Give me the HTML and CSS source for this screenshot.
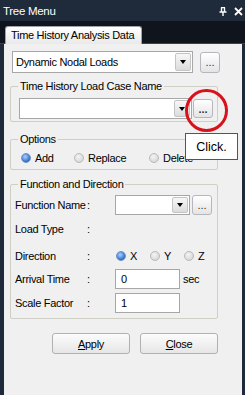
FILE: index.html
```html
<!DOCTYPE html>
<html lang="en">
<head>
    <meta charset="UTF-8">
    <title>Tree Menu</title>
    <link rel="stylesheet" href="styles.css">
</head>
<body>

    <div class="titlebar">
        <span class="title">Tree Menu</span>
        <span class="title-icons">
            <svg width="8" height="9" viewBox="0 0 8 9">
                <path d="M2 0.5h4M2.5 0.5v4.5M5.5 0.5v4.5M0.5 5h7M4 5v4" stroke="#fff" stroke-width="1.4" fill="none"/>
            </svg>
            <svg width="9" height="9" viewBox="0 0 9 9">
                <path d="M1 1L8 8M8 1L1 8" stroke="#fff" stroke-width="1.8"/>
            </svg>
        </span>
    </div>

    <div class="tabstrip">
        <div class="tab">Time History Analysis Data</div>
    </div>

    <div class="panel">
        <div class="top-row">
            <div class="combo combo-wide">
                <span class="combo-text">Dynamic Nodal Loads</span>
                <span class="combo-arrow"></span>
            </div>
            <button class="dots">...</button>
        </div>

        <div class="group group-case">
            <div class="group-title">Time History Load Case Name</div>
            <div class="case-row">
                <div class="combo combo-case">
                    <span class="combo-text"></span>
                    <span class="combo-arrow"></span>
                </div>
                <button class="dots dots-case">...</button>
            </div>
        </div>

        <div class="group group-options">
            <div class="group-title">Options</div>
            <div class="radio-row">
                <span class="opt opt-add"><span class="radio checked"></span>Add</span>
                <span class="opt opt-replace"><span class="radio"></span>Replace</span>
                <span class="opt"><span class="radio"></span>Delete</span>
            </div>
        </div>

        <div class="group group-func">
            <div class="group-title">Function and Direction</div>

            <div class="row row-first">
                <span class="label">Function Name</span><span class="colon">:</span>
                <div class="combo combo-func">
                    <span class="combo-text"></span>
                    <span class="combo-arrow"></span>
                </div>
                <button class="dots dots-func">...</button>
            </div>

            <div class="row">
                <span class="label">Load Type</span><span class="colon">:</span>
            </div>

            <div class="row row-dir">
                <span class="label">Direction</span><span class="colon">:</span>
                <span class="dir dir-x"><span class="radio checked"></span>X</span>
                <span class="dir dir-y"><span class="radio"></span>Y</span>
                <span class="dir"><span class="radio"></span>Z</span>
            </div>

            <div class="row row-arrival">
                <span class="label">Arrival Time</span><span class="colon">:</span>
                <div class="field">0</div>
                <span class="unit">sec</span>
            </div>

            <div class="row">
                <span class="label">Scale Factor</span><span class="colon">:</span>
                <div class="field">1</div>
            </div>
        </div>

        <div class="buttons">
            <button class="btn"><u>A</u>pply</button>
            <button class="btn"><u>C</u>lose</button>
        </div>

        <div class="highlight"></div>
        <div class="tip">Click.</div>
    </div>

</body>
</html>
```

FILE: styles.css
```css
* {
    margin: 0;
    padding: 0;
    box-sizing: border-box;
}

body {
    width: 245px;
    height: 395px;
    background-color: #1e2939;
    font-family: "Liberation Sans", Arial, sans-serif;
    font-size: 11px;
    letter-spacing: -0.3px;
    color: #000;
    overflow: hidden;
}

.titlebar {
    height: 21px;
    display: flex;
    align-items: center;
    justify-content: space-between;
    padding: 0 2px 0 3px;
    background-color: #1f2a3a;
    color: #fff;
    font-size: 11.5px;
}

.title-icons {
    display: flex;
    align-items: center;
    gap: 7px;
    padding-top: 1px;
}

.title-icons svg {
    display: block;
}

.tabstrip {
    height: 23px;
    padding: 5px 0 0 5px;
    background-color: #10151d;
    border-bottom: 1px solid #3a4150;
}

.tab {
    width: 137px;
    height: 18px;
    padding: 2px 0 0 5px;
    background: linear-gradient(#ffffff, #e9e9e9);
    border: 1px solid #a0a4aa;
    border-bottom: none;
    border-radius: 3px 3px 0 0;
    white-space: nowrap;
}

.panel {
    position: relative;
    width: 238px;
    height: 351px;
    margin-left: 4px;
    padding-left: 6px;
    background-color: #f0f0f0;
}

.top-row {
    display: flex;
    align-items: center;
    padding-top: 7px;
    margin-left: 2px;
}

.combo {
    display: flex;
    align-items: center;
    background-color: #fff;
    border: 1px solid #a7a7a7;
    padding: 1px;
}

.combo-text {
    flex: 1;
    padding-left: 2px;
    white-space: nowrap;
}

.combo-arrow {
    position: relative;
    width: 16px;
    height: 100%;
    background: linear-gradient(#f7f7f7, #dcdcdc);
    border: 1px solid #c4c4c4;
    border-radius: 2px;
}

.combo-arrow::after {
    content: "";
    position: absolute;
    left: 4px;
    top: 50%;
    margin-top: -2px;
    border-left: 3.5px solid transparent;
    border-right: 3.5px solid transparent;
    border-top: 4px solid #000;
}

.combo-wide {
    width: 181px;
    height: 22px;
}

.dots {
    height: 21px;
    width: 20px;
    margin-left: 7px;
    background: linear-gradient(#ffffff, #e4e4e4);
    border: 1px solid #b4b8be;
    border-radius: 3px;
    font-family: "Liberation Sans", Arial, sans-serif;
    font-size: 11px;
    letter-spacing: 0;
    line-height: 14px;
    color: #333;
}

.group {
    width: 208px;
    border: 1px solid #cfcfc6;
    border-radius: 2px;
}

.group-title {
    width: fit-content;
    margin: -7px 0 0 7px;
    padding: 0 2px;
    line-height: 13px;
    background-color: #f0f0f0;
}

.group-case {
    margin-top: 13px;
    padding-bottom: 2px;
}

.case-row {
    display: flex;
    align-items: center;
    margin: 5px 0 0 8px;
}

.combo-case {
    width: 173px;
    height: 21px;
}

.dots-case {
    width: 20px;
    height: 19px;
    margin-left: 1px;
    font-weight: bold;
}

.group-options {
    margin-top: 17px;
    padding-bottom: 5px;
}

.radio-row {
    display: flex;
    align-items: center;
    height: 13px;
    margin: 5px 0 0 10px;
}

.opt {
    display: flex;
    align-items: center;
    white-space: nowrap;
}

.opt-add {
    width: 53px;
}

.opt-replace {
    width: 75px;
}

.radio {
    width: 10px;
    height: 10px;
    margin-right: 4px;
    border-radius: 50%;
    border: 1px solid #b9b9b9;
    background: radial-gradient(circle at 40% 35%, #f4f4f4, #cfcfcf);
}

.radio.checked {
    border-color: #6e8fbf;
    background: radial-gradient(circle at 40% 35%, #a9d2ff, #2f6fd0 70%);
}

.group-func {
    margin-top: 14px;
    padding-bottom: 5px;
}

.row {
    display: flex;
    align-items: center;
    height: 20px;
    margin: 4px 0 0 4px;
}

.row-dir {
    margin-top: 7px;
}

.row-arrival {
    margin-top: 3px;
}

.label {
    width: 72px;
    white-space: nowrap;
}

.colon {
    width: 28px;
}

.combo-func {
    width: 75px;
    height: 20px;
}

.dots-func {
    height: 20px;
    margin-left: 2px;
}

.dir {
    display: flex;
    align-items: center;
}

.dir-x {
    width: 34px;
    margin-left: 1px;
}

.dir-y {
    width: 34px;
}

.field {
    width: 65px;
    height: 20px;
    padding: 3px 0 0 5px;
    background-color: #fff;
    border: 1px solid #a7a7a7;
}

.unit {
    margin-left: 3px;
}

.buttons {
    display: flex;
    gap: 10px;
    margin: 14px 0 0 42px;
}

.btn {
    width: 78px;
    height: 21px;
    background: linear-gradient(#fcfcfc, #e6e6e6);
    border: 1px solid #b1b1b1;
    border-radius: 3px;
    font-family: "Liberation Sans", Arial, sans-serif;
    font-size: 11px;
    letter-spacing: -0.3px;
    color: #000;
}

.highlight {
    position: absolute;
    left: 181px;
    top: 45px;
    width: 43px;
    height: 43px;
    border: 3px solid #d8121c;
    border-radius: 50%;
}

.tip {
    position: absolute;
    left: 181px;
    top: 89px;
    width: 53px;
    height: 27px;
    padding-top: 6px;
    text-align: center;
    background-color: #fff;
    border: 1px solid #c8232b;
    font-size: 12.5px;
    letter-spacing: 0;
}
```
